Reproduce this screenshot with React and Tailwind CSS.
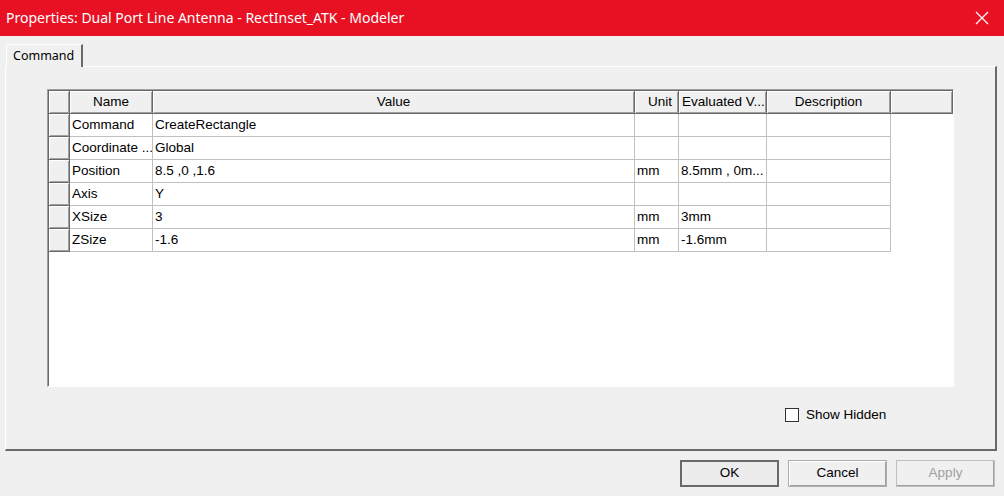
import React from 'react';

// column widths of the property grid, px
const cols = [
  { key: 'name', label: 'Name', w: 83 },
  { key: 'value', label: 'Value', w: 482 },
  { key: 'unit', label: 'Unit', w: 44, align: 'right' },
  { key: 'eval', label: 'Evaluated V...', w: 88, align: 'left' },
  { key: 'desc', label: 'Description', w: 124 },
];

const rows = [
  { name: 'Command', value: 'CreateRectangle', unit: '', eval: '', desc: '' },
  { name: 'Coordinate ...', value: 'Global', unit: '', eval: '', desc: '' },
  { name: 'Position', value: '8.5 ,0 ,1.6', unit: 'mm', eval: '8.5mm , 0m...', desc: '' },
  { name: 'Axis', value: 'Y', unit: '', eval: '', desc: '' },
  { name: 'XSize', value: '3', unit: 'mm', eval: '3mm', desc: '' },
  { name: 'ZSize', value: '-1.6', unit: 'mm', eval: '-1.6mm', desc: '' },
];

const raised =
  'bg-[#f0f0f0] border-r border-b border-[#696969] shadow-[inset_1px_1px_0_#ffffff,inset_-1px_-1px_0_#a0a0a0]';

const HeaderCell = ({ w, children, align }) => (
  <div
    className={`${raised} h-[23px] shrink-0 flex items-center overflow-hidden whitespace-nowrap ${
      align === 'left' ? 'justify-start pl-[3px]' : align === 'right' ? 'justify-end pr-[6px]' : 'justify-center'
    }`}
    style={{ width: w }}
  >
    {children}
  </div>
);

const Button = ({ children, variant }) => {
  const base = 'w-[99px] h-[27px] flex items-center justify-center text-[13.5px]';
  if (variant === 'default')
    return <div className={`${base} bg-[#ececec] border-2 border-[#696969] text-black`}>{children}</div>;
  if (variant === 'disabled')
    return <div className={`${base} bg-[#f0f0f0] border border-[#bfbfbf] shadow-[inset_-1px_-1px_0_#a0a0a0] text-[#a0a0a0]`}>{children}</div>;
  return (
    <div className={`${base} bg-[#f0f0f0] border border-[#adadad] shadow-[inset_1px_1px_0_#ffffff,inset_-1px_-1px_0_#a0a0a0] text-black`}>
      {children}
    </div>
  );
};

const App = () => {
  return (
    <div
      className="w-[1004px] h-[496px] bg-[#f0f0f0] flex flex-col overflow-hidden text-black"
      style={{ fontFamily: '"Liberation Sans", Arial, sans-serif' }}
    >
      {/* title bar */}
      <div className="h-[36px] bg-[#e81123] flex items-center justify-between pl-[6px] pr-[15px] shrink-0">
        <span className="text-white text-[14px] pb-[1px]" style={{ fontFamily: '"Noto Sans", sans-serif' }}>
          Properties: Dual Port Line Antenna - RectInset_ATK - Modeler
        </span>
        <svg width="14" height="14" viewBox="0 0 14 14">
          <path d="M1 1L13 13M13 1L1 13" stroke="#ffffff" strokeWidth="1.2" />
        </svg>
      </div>

      {/* tab strip */}
      <div className="pl-[6px] pt-[8px] flex">
        <div
          className="h-[23px] w-[77px] border-t border-l border-white border-r-2 border-r-[#696969] flex items-center pl-[6px] text-[12.5px] -mb-[1px] relative z-10 bg-[#f0f0f0]"
          style={{ fontFamily: '"Noto Sans", sans-serif' }}
        >
          Command
        </div>
      </div>

      {/* tab panel */}
      <div className="ml-[5px] w-[992px] h-[385px] border-t border-l border-white border-r-2 border-b-2 border-r-[#696969] border-b-[#696969] flex flex-col shrink-0">
        <div className="pl-[41px] pt-[22px]">
          {/* grid */}
          <div className="w-[907px] h-[298px] border-t border-l border-[#a0a0a0] border-r border-b border-r-white border-b-white">
            <div className="w-full h-full border-t border-l border-[#696969] bg-white text-[13.5px] overflow-hidden">
              <div className="flex">
                <HeaderCell w={21} />
                {cols.map((c) => (
                  <HeaderCell key={c.key} w={c.w} align={c.key === 'eval' ? 'left' : c.key === 'unit' ? 'right' : undefined}>
                    {c.label}
                  </HeaderCell>
                ))}
                <HeaderCell w={62} />
              </div>
              {rows.map((r) => (
                <div key={r.name} className="flex">
                  <div className={`${raised} w-[21px] h-[23px] shrink-0`} />
                  {cols.map((c) => (
                    <div
                      key={c.key}
                      className="h-[23px] shrink-0 border-r border-b border-[#c0c0c0] flex items-center pl-[2px] whitespace-nowrap overflow-hidden"
                      style={{ width: c.w }}
                    >
                      {r[c.key]}
                    </div>
                  ))}
                </div>
              ))}
            </div>
          </div>
        </div>

        {/* show hidden */}
        <div className="flex items-center pl-[779px] pt-[18px]">
          <div className="w-[14px] h-[14px] border border-[#333333] bg-white" />
          <span className="ml-[7px] text-[13.5px]">Show Hidden</span>
        </div>
      </div>

      {/* buttons */}
      <div className="flex justify-end gap-[9px] pr-[9px] pt-[9px]">
        <Button variant="default">OK</Button>
        <Button>Cancel</Button>
        <Button variant="disabled">Apply</Button>
      </div>
    </div>
  );
};

export default App;
